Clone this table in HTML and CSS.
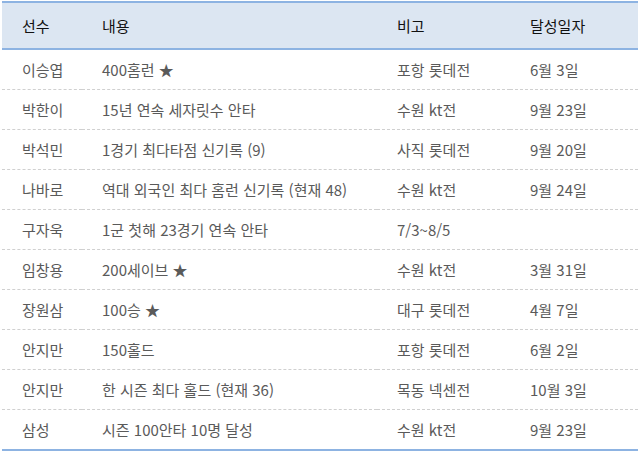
FILE: index.html
```html
<!DOCTYPE html>
<html lang="ko">
<head>
<meta charset="utf-8">
<link rel="stylesheet" href="styles.css">
</head>
<body>
<div class="wrap">
<table class="records">
<colgroup>
<col class="c1"><col class="c2"><col class="c3"><col class="c4">
</colgroup>
<thead>
<tr><th>선수</th><th>내용</th><th>비고</th><th>달성일자</th></tr>
</thead>
<tbody>
<tr><td>이승엽</td><td>400홈런 ★</td><td>포항 롯데전</td><td>6월 3일</td></tr>
<tr><td>박한이</td><td>15년 연속 세자릿수 안타</td><td>수원 kt전</td><td>9월 23일</td></tr>
<tr><td>박석민</td><td>1경기 최다타점 신기록 (9)</td><td>사직 롯데전</td><td>9월 20일</td></tr>
<tr><td>나바로</td><td>역대 외국인 최다 홈런 신기록 (현재 48)</td><td>수원 kt전</td><td>9월 24일</td></tr>
<tr><td>구자욱</td><td>1군 첫해 23경기 연속 안타</td><td>7/3~8/5</td><td></td></tr>
<tr><td>임창용</td><td>200세이브 ★</td><td>수원 kt전</td><td>3월 31일</td></tr>
<tr><td>장원삼</td><td>100승 ★</td><td>대구 롯데전</td><td>4월 7일</td></tr>
<tr><td>안지만</td><td>150홀드</td><td>포항 롯데전</td><td>6월 2일</td></tr>
<tr><td>안지만</td><td>한 시즌 최다 홀드 (현재 36)</td><td>목동 넥센전</td><td>10월 3일</td></tr>
<tr><td>삼성</td><td>시즌 100안타 10명 달성</td><td>수원 kt전</td><td>9월 23일</td></tr>
</tbody>
</table>
</div>
</body>
</html>
```
FILE: styles.css
```css
html, body {
  margin: 0;
  padding: 0;
  background: #ffffff;
}
.wrap {
  padding: 1px 2px;
}
.records {
  width: 636px;
  border-collapse: collapse;
  table-layout: fixed;
  font-family: "Noto Sans CJK KR", "Noto Sans", sans-serif;
  font-size: 15px;
  border-top: 2px solid #8db3e2;
  border-bottom: 2px solid #8db3e2;
}
.c1 { width: 80px; }
.c2 { width: 295px; }
.c3 { width: 133px; }
.c4 { width: 128px; }
.records th {
  background: #dce6f2;
  color: #111;
  font-weight: normal;
  text-align: left;
  height: 45px;
  padding: 0 0 0 20px;
  border-bottom: 2px solid #8db3e2;
}
.records td {
  color: #5a5a5a;
  text-align: left;
  height: 39px;
  padding: 0 0 0 20px;
  border-bottom: 1px dashed #d0d0d0;
  white-space: nowrap;
}
.records tbody tr:last-child td {
  border-bottom: none;
}
```
